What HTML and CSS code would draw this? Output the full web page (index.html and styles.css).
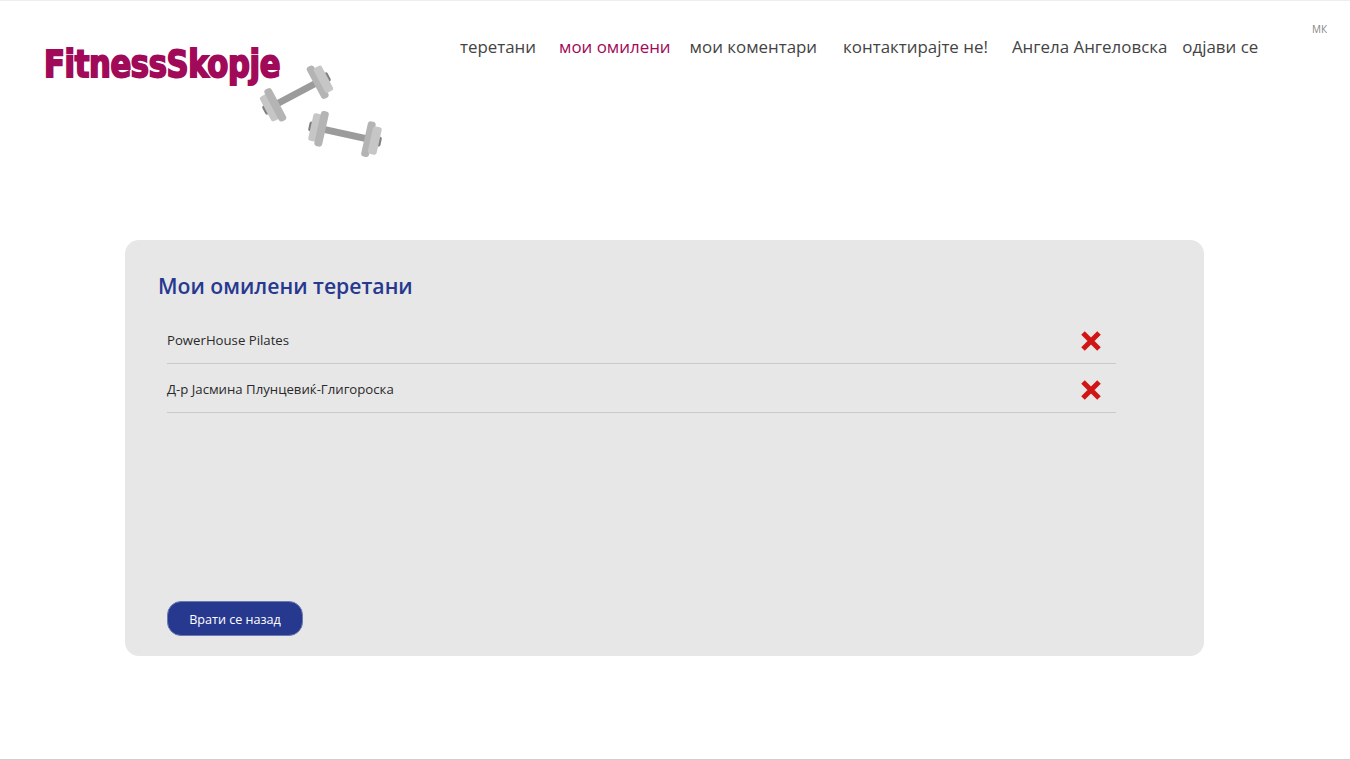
FILE: index.html
```html
<!DOCTYPE html>
<html lang="mk">
<head>
<meta charset="utf-8">
<title>FitnessSkopje</title>
<link rel="stylesheet" href="styles.css">
</head>
<body>
<div class="page">
  <header class="header">
    <a class="logo" href="#">
      <span class="logo-text">FitnessSkopje</span>
      <svg class="logo-art" width="140" height="110" viewBox="0 0 140 110" aria-hidden="true">
        <g transform="translate(46.5 38.5) rotate(-28)">
          <rect x="-24" y="-3.5" width="48" height="7" fill="#9b9b9b"/>
          <rect x="-37" y="-5" width="6" height="10" rx="2" fill="#808080"/>
          <rect x="31" y="-5" width="6" height="10" rx="2" fill="#808080"/>
          <rect x="-35" y="-14" width="9" height="28" rx="2.5" fill="#c6c6c6"/>
          <rect x="-28" y="-18" width="8" height="36" rx="3" fill="#b4b4b4"/>
          <rect x="20" y="-18" width="8" height="36" rx="3" fill="#b4b4b4"/>
          <rect x="26" y="-14" width="9" height="28" rx="2.5" fill="#c6c6c6"/>
        </g>
        <g transform="translate(95 79) rotate(12.5)">
          <rect x="-24" y="-3.5" width="48" height="7" fill="#9b9b9b"/>
          <rect x="-37" y="-5" width="6" height="10" rx="2" fill="#808080"/>
          <rect x="31" y="-5" width="6" height="10" rx="2" fill="#808080"/>
          <rect x="-35" y="-14" width="9" height="28" rx="2.5" fill="#c6c6c6"/>
          <rect x="-28" y="-18" width="8" height="36" rx="3" fill="#b4b4b4"/>
          <rect x="20" y="-18" width="8" height="36" rx="3" fill="#b4b4b4"/>
          <rect x="26" y="-14" width="9" height="28" rx="2.5" fill="#c6c6c6"/>
        </g>
      </svg>
    </a>
    <nav class="nav">
      <a class="nav-link n1" href="#">теретани</a>
      <a class="nav-link n2 active" href="#">мои омилени</a>
      <a class="nav-link n3" href="#">мои коментари</a>
      <a class="nav-link n4" href="#">контактирајте не!</a>
      <a class="nav-link n5" href="#">Ангела Ангеловска</a>
      <a class="nav-link n6" href="#">одјави се</a>
    </nav>
    <a class="lang" href="#">МК</a>
  </header>
  <main class="card">
    <h1 class="title">Мои омилени теретани</h1>
    <ul class="list">
      <li class="row">
        <span>PowerHouse Pilates</span>
        <svg class="remove" width="22" height="20" viewBox="0 0 22 20" aria-hidden="true"><path d="M3 2 L19 18 M19 2 L3 18" stroke="#d11414" stroke-width="5"/></svg>
      </li>
      <li class="row">
        <span>Д-р Јасмина Плунцевиќ-Глигороска</span>
        <svg class="remove" width="22" height="20" viewBox="0 0 22 20" aria-hidden="true"><path d="M3 2 L19 18 M19 2 L3 18" stroke="#d11414" stroke-width="5"/></svg>
      </li>
    </ul>
    <a class="back" href="#">Врати се назад</a>
  </main>
</div>
</body>
</html>
```

FILE: styles.css
```css
* { box-sizing: border-box; }
html, body { margin: 0; padding: 0; }
body { background: #fff; font-family: "Open Sans", "Liberation Sans", sans-serif; color: #222; overflow: hidden; }
a { text-decoration: none; color: inherit; }
.page { height: 760px; border-top: 1px solid #eeeeee; border-bottom: 1px solid #cfcfcf; display: flex; flex-direction: column; }
.header { height: 239px; position: relative; display: flex; align-items: flex-start; }
.logo { position: absolute; left: 44px; top: 40px; width: 340px; height: 120px; }
.logo-text { font-family: "DejaVu Sans Condensed", "DejaVu Sans", sans-serif; font-stretch: condensed; font-weight: 700; font-size: 37px; line-height: 48px; color: #a10a58; letter-spacing: -0.4px; -webkit-text-stroke: 1.8px #a10a58; display: block; transform: scaleX(0.92); transform-origin: left center; }
.logo-art { position: absolute; left: 206px; top: 14px; }
.nav { display: flex; margin-left: 460px; padding-top: 34px; font-size: 16.9px; line-height: 24px; color: #444; white-space: nowrap; }
.nav-link { display: block; }
.active { color: #a10a58; }
.n2 { margin-left: 23px; }
.n3 { margin-left: 19px; }
.n4 { margin-left: 26px; }
.n5 { margin-left: 24px; }
.n6 { margin-left: 15px; }
.lang { position: absolute; left: 1312px; top: 21px; font-size: 10px; line-height: 15px; color: #888; }
.card { margin-left: 125px; width: 1079px; height: 416px; background: #e7e7e7; border-radius: 14px; padding: 30px 88px 20px 33px; display: flex; flex-direction: column; }
.title { margin: 0; font-size: 21.2px; line-height: 32px; font-weight: 600; color: #27398f; }
.list { list-style: none; margin: 13px 0 0 9px; padding: 0; }
.row { height: 49px; border-bottom: 1px solid #cacaca; display: flex; align-items: center; justify-content: space-between; font-size: 13.2px; color: #2a2a2a; padding: 2px 14px 0 0; }
.remove { display: block; margin-top: 2px; }
.back { margin: auto 0 0 9px; width: 136px; height: 35px; border-radius: 14px; background: #27398f; border: 1px solid #6d7ab0; color: #fff; font-size: 12.6px; padding-top: 1px; display: flex; align-items: center; justify-content: center; }
```
